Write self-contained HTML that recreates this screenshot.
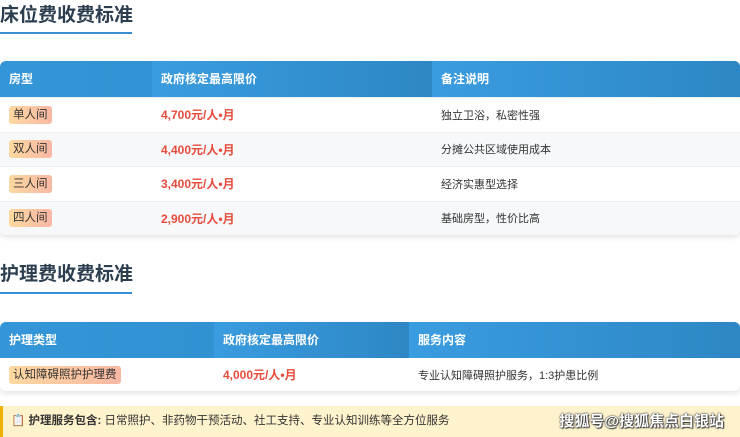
<!DOCTYPE html>
<html><head><meta charset="utf-8"><style>
body{margin:0;width:740px;height:437px;overflow:hidden;background:#fff;font-family:"Liberation Sans","Noto Sans CJK SC",sans-serif;color:#333;position:relative}
.t{position:absolute;left:0;font-size:19px;font-weight:bold;color:#2c3e50;line-height:24px}
.ul{position:absolute;left:0;width:132px;height:2px;background:#3a8fd4}
.tbl{position:absolute;left:0;width:740px;border-radius:6px;overflow:hidden;box-shadow:0 2px 6px rgba(0,0,0,.12);background:#fff}
.hd{display:flex;height:36px;background:linear-gradient(90deg,#3496d8,#2b84c0);color:#fff;font-size:12px;font-weight:bold}
.hd div{line-height:36px;padding-left:9px;box-sizing:border-box}
.hd div+div{background:linear-gradient(90deg,#3a9ce0,#2d87c4)}
.r{display:flex;height:34.5px;font-size:11px;border-top:1px solid #eceff2;box-sizing:border-box;align-items:center}
.r div{padding-left:9px;box-sizing:border-box}
.tag{display:inline-block;background:linear-gradient(90deg,#fdd8a0,#f9b8a4);color:#333;padding:1px 4px;border-radius:3px;font-size:11.5px;line-height:16px}
.p{color:#e74c3c;font-weight:bold;font-size:12px}
.note{position:absolute;left:0;top:406px;width:740px;height:31px;background:#fff3cd;border-left:3px solid #f0b000;box-sizing:border-box;font-size:11.5px;line-height:31px;padding-left:8px}
</style></head><body>
<div class="t" style="top:4px">床位费收费标准</div>
<div class="ul" style="top:32px"></div>
<div class="tbl" style="top:61px;height:174px">
<div class="hd"><div style="width:152px">房型</div><div style="width:280px">政府核定最高限价</div><div style="width:308px">备注说明</div></div>
<div class="r" style="background:#fff"><div style="width:152px"><span class="tag">单人间</span></div><div class="p" style="width:280px">4,700元/人•月</div><div style="width:308px">独立卫浴，私密性强</div></div>
<div class="r" style="background:#f6f8fa"><div style="width:152px"><span class="tag">双人间</span></div><div class="p" style="width:280px">4,400元/人•月</div><div style="width:308px">分摊公共区域使用成本</div></div>
<div class="r" style="background:#fff"><div style="width:152px"><span class="tag">三人间</span></div><div class="p" style="width:280px">3,400元/人•月</div><div style="width:308px">经济实惠型选择</div></div>
<div class="r" style="background:#f6f8fa"><div style="width:152px"><span class="tag">四人间</span></div><div class="p" style="width:280px">2,900元/人•月</div><div style="width:308px">基础房型，性价比高</div></div>
</div>
<div class="t" style="top:263px">护理费收费标准</div>
<div class="ul" style="top:292px"></div>
<div class="tbl" style="top:322px;height:69px">
<div class="hd"><div style="width:214px">护理类型</div><div style="width:195px">政府核定最高限价</div><div style="width:331px">服务内容</div></div>
<div class="r" style="background:#fff;height:33px;border:0"><div style="width:214px"><span class="tag">认知障碍照护护理费</span></div><div class="p" style="width:195px">4,000元/人•月</div><div style="width:331px">专业认知障碍照护服务，1:3护患比例</div></div>
</div>
<div class="note">📋 <b>护理服务包含:</b> 日常照护、非药物干预活动、社工支持、专业认知训练等全方位服务<span style="position:absolute;right:16px;top:0;font-size:15px;color:#fff;font-weight:bold;text-shadow:0 0 2px #333,0 0 1px #222,1px 1px 1px #444">搜狐号@搜狐焦点白银站</span></div>
</body></html>
